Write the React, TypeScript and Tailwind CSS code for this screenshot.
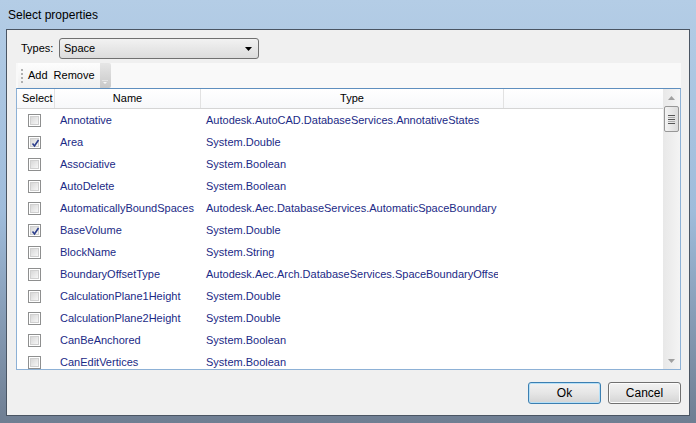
import React from 'react';

interface PropRow {
  name: string;
  type: string;
  checked: boolean;
}

const rows: PropRow[] = [
  { name: 'Annotative', type: 'Autodesk.AutoCAD.DatabaseServices.AnnotativeStates', checked: false },
  { name: 'Area', type: 'System.Double', checked: true },
  { name: 'Associative', type: 'System.Boolean', checked: false },
  { name: 'AutoDelete', type: 'System.Boolean', checked: false },
  { name: 'AutomaticallyBoundSpaces', type: 'Autodesk.Aec.DatabaseServices.AutomaticSpaceBoundary', checked: false },
  { name: 'BaseVolume', type: 'System.Double', checked: true },
  { name: 'BlockName', type: 'System.String', checked: false },
  { name: 'BoundaryOffsetType', type: 'Autodesk.Aec.Arch.DatabaseServices.SpaceBoundaryOffsetType', checked: false },
  { name: 'CalculationPlane1Height', type: 'System.Double', checked: false },
  { name: 'CalculationPlane2Height', type: 'System.Double', checked: false },
  { name: 'CanBeAnchored', type: 'System.Boolean', checked: false },
  { name: 'CanEditVertices', type: 'System.Boolean', checked: false },
];

const CheckBox: React.FC<{ checked: boolean }> = ({ checked }) => (
  <div className="w-[13px] h-[13px] border border-[#8e8f8f] bg-white p-[1px]">
    <div className="w-full h-full bg-gradient-to-br from-[#d8d8d8] to-[#f6f6f6] border border-[#d0d0d0] relative">
      {checked && (
        <svg width="9" height="9" viewBox="0 0 9 9" className="absolute left-0 top-0">
          <path d="M1.5 4.5 L3.5 7 L7.5 1" fill="none" stroke="#2c3e8c" strokeWidth="1.6" />
        </svg>
      )}
    </div>
  </div>
);

const WinButton: React.FC<{ label: string; focused?: boolean }> = ({ label, focused }) => (
  <div
    className={
      focused
        ? 'w-[73px] h-[22px] rounded-[3px] border border-[#3c7fb1] shadow-[inset_0_0_0_1px_#b6e0f7] bg-gradient-to-b from-[#f2f2f2] via-[#e6e6e6] to-[#d4d4d4] flex items-center justify-center text-black'
        : 'w-[73px] h-[22px] rounded-[3px] border border-[#707070] shadow-[inset_0_0_0_1px_#fcfcfc] bg-gradient-to-b from-[#f2f2f2] via-[#e6e6e6] to-[#d4d4d4] flex items-center justify-center text-black'
    }
  >
    {label}
  </div>
);

export default function App() {
  return (
    <div
      className="w-[696px] h-[423px] bg-gradient-to-b from-[#b4cde6] via-[#9fbcdb] to-[#6f7e92] flex flex-col text-[11px] overflow-hidden"
      style={{ fontFamily: '"Liberation Sans", Arial, sans-serif' }}
    >
      {/* title bar */}
      <div className="h-[29px] px-[8px] flex items-center text-[12px] text-black shrink-0">
        <span>Select properties</span>
      </div>

      <div className="mx-[6px] mb-[7px] flex-1 border border-[#4a5563] bg-[#f0f0f0] flex flex-col">
        {/* types */}
        <div className="flex items-center mt-[8px] h-[21px]">
          <span className="ml-[14px] w-[38px]">Types:</span>
          <div className="w-[200px] h-[21px] rounded-[3px] border border-[#707070] bg-gradient-to-b from-[#f2f2f2] to-[#dcdcdc] flex items-center justify-between pl-[4px] pr-[6px]">
            <span>Space</span>
            <svg width="7" height="4" viewBox="0 0 7 4">
              <path d="M0 0 H7 L3.5 4 Z" fill="#000" />
            </svg>
          </div>
        </div>

        {/* toolbar tray */}
        <div className="mt-[4px] ml-[9px] mr-[8px] h-[25px] bg-[#f9f9f9] flex items-stretch">
          <div className="ml-[2px] flex items-center bg-gradient-to-b from-[#fdfdfd] to-[#f0f0f0] pl-[3px]">
            <div className="flex flex-col gap-[2px] mr-[5px]">
              <div className="w-[2px] h-[2px] bg-[#b0b0b0]" />
              <div className="w-[2px] h-[2px] bg-[#b0b0b0]" />
              <div className="w-[2px] h-[2px] bg-[#b0b0b0]" />
              <div className="w-[2px] h-[2px] bg-[#b0b0b0]" />
            </div>
            <span className="mr-[6px]">Add</span>
            <span className="mr-[5px]">Remove</span>
          </div>
          <div className="w-[11px] rounded-r-[2px] bg-gradient-to-b from-[#e6e6e6] to-[#c9c9c9] flex flex-col justify-end items-center pb-[3px]">
            <svg width="6" height="5" viewBox="0 0 6 5">
              <path d="M0 0 H6" stroke="#f8f8f8" strokeWidth="1" />
              <path d="M1 2 H5 L3 4 Z" fill="#f8f8f8" />
            </svg>
          </div>
        </div>

        {/* grid */}
        <div className="ml-[9px] mr-[8px] h-[282px] border border-[#8db1d6] border-t-[#5f8fbf] bg-white flex overflow-hidden">
          <div className="flex-1 flex flex-col overflow-hidden">
            <div className="h-[20px] flex shrink-0 border-b border-[#d5d5d5] bg-gradient-to-b from-white to-[#f7f8fa] text-black">
              <div className="w-[38px] pl-[5px] flex items-center border-r border-[#e2e2e2]">Select</div>
              <div className="w-[146px] flex items-center justify-center border-r border-[#e2e2e2]">Name</div>
              <div className="w-[303px] flex items-center justify-center border-r border-[#e2e2e2]">Type</div>
              <div className="flex-1" />
            </div>
            {rows.map((r) => (
              <div key={r.name} className="h-[22px] flex items-center shrink-0 text-[#1b2a86]">
                <div className="w-[38px] flex items-center pl-[11px]">
                  <CheckBox checked={r.checked} />
                </div>
                <div className="w-[146px] pl-[5px] whitespace-nowrap overflow-hidden">{r.name}</div>
                <div className="w-[297px] pl-[5px] whitespace-nowrap overflow-hidden">{r.type}</div>
              </div>
            ))}
          </div>

          {/* scrollbar */}
          <div className="w-[17px] bg-gradient-to-r from-[#e8e8e8] to-[#f4f4f4] flex flex-col items-center shrink-0">
            <div className="h-[17px] flex items-center justify-center">
              <svg width="7" height="4" viewBox="0 0 7 4">
                <path d="M0 4 H7 L3.5 0 Z" fill="#a0a0a0" />
              </svg>
            </div>
            <div className="w-[15px] h-[26px] rounded-[2px] border border-[#979797] bg-gradient-to-r from-[#f3f3f3] to-[#dcdcdc] flex flex-col items-center justify-center gap-[1px]">
              <div className="w-[7px] h-[1px] bg-[#555]" />
              <div className="w-[7px] h-[1px] bg-[#aaa]" />
              <div className="w-[7px] h-[1px] bg-[#555]" />
              <div className="w-[7px] h-[1px] bg-[#aaa]" />
              <div className="w-[7px] h-[1px] bg-[#555]" />
            </div>
            <div className="flex-1" />
            <div className="h-[17px] flex items-center justify-center">
              <svg width="7" height="4" viewBox="0 0 7 4">
                <path d="M0 0 H7 L3.5 4 Z" fill="#a0a0a0" />
              </svg>
            </div>
          </div>
        </div>

        {/* buttons */}
        <div className="mt-[12px] mr-[8px] flex justify-end gap-[7px] text-[12px]">
          <WinButton label="Ok" focused />
          <WinButton label="Cancel" />
        </div>
      </div>
    </div>
  );
}
